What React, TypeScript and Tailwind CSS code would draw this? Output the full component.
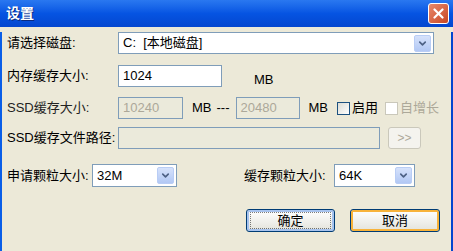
import { ChevronDown } from 'lucide-react';

const font = { fontFamily: '"Liberation Sans", "Noto Sans CJK SC", sans-serif' };

function DropArrow({ size = 'h-[17px] w-[17px]' }: { size?: string }) {
  return (
    <div className={`${size} flex items-center justify-center rounded-[2px] border border-[#b9cdf5] bg-gradient-to-b from-[#d6e2fb] to-[#b2c8f4]`}>
      <ChevronDown size={11} strokeWidth={3.5} className="text-[#4d6185]" />
    </div>
  );
}

function Select({ value, className }: { value: string; className: string }) {
  return (
    <div className={`flex items-center justify-between border border-[#7f9db9] bg-white pl-[4px] pr-[2px] ${className}`}>
      <span className="whitespace-pre text-[13px] text-black">{value}</span>
      <DropArrow />
    </div>
  );
}

function Input({ value, className, disabled }: { value?: string; className: string; disabled?: boolean }) {
  return (
    <div
      className={`flex items-center border border-[#7f9db9] pl-[4px] text-[13px] ${
        disabled ? 'bg-[#ebeadb] text-[#aca899]' : 'bg-white text-black'
      } ${className}`}
    >
      {value}
    </div>
  );
}

export default function App() {
  return (
    <div className="relative h-[251px] w-[453px] overflow-hidden bg-[#ece9d8] text-[13px] text-black" style={font}>
      <div className="flex h-[27px] items-center justify-between bg-gradient-to-b from-[#2a78f0] via-[#0654e2] to-[#0446cf] pl-[6px] pr-[4px]">
        <span className="text-[14px] font-bold text-white [text-shadow:1px_1px_0_#0a2a80]">设置</span>
        <div className="flex h-[21px] w-[21px] items-center justify-center rounded-[3px] border border-white bg-gradient-to-br from-[#e8896c] to-[#c8451f]">
          <svg width="11" height="11" viewBox="0 0 11 11">
            <path d="M1.5 1.5 L9.5 9.5 M9.5 1.5 L1.5 9.5" stroke="white" strokeWidth="2.2" strokeLinecap="round" />
          </svg>
        </div>
      </div>

      <div className="h-[224px] border-x-[2px] border-l-[#0a5ee8] border-r-[#0446cf] px-[5px]">
        <div className="mt-[5px] flex h-[22px] items-center">
          <span className="w-[111px]">请选择磁盘:</span>
          <Select value="C:  [本地磁盘]" className="h-[22px] w-[316px]" />
        </div>

        <div className="mt-[11px] flex h-[22px] items-center">
          <span className="w-[111px]">内存缓存大小:</span>
          <Input value="1024" className="h-[22px] w-[104px]" />
          <span className="ml-[32px] mt-[8px]">MB</span>
        </div>

        <div className="mt-[10px] flex h-[22px] items-center">
          <span className="w-[111px] text-[#222]">SSD缓存大小:</span>
          <Input value="10240" disabled className="h-[22px] w-[65px]" />
          <span className="ml-[9px]">MB</span>
          <span className="ml-[5px]">---</span>
          <Input value="20480" disabled className="ml-[6px] h-[22px] w-[64px]" />
          <span className="ml-[9px]">MB</span>
          <div className="ml-[9px] h-[13px] w-[13px] border border-[#1c5180] bg-gradient-to-br from-[#dcdcd5] to-white" />
          <span className="ml-[2px]">启用</span>
          <div className="ml-[7px] h-[13px] w-[13px] border border-[#cac8bb] bg-white" />
          <span className="ml-[2px] text-[#aca899]">自增长</span>
        </div>

        <div className="mt-[8px] flex h-[22px] items-center">
          <span className="w-[111px]">SSD缓存文件路径:</span>
          <Input disabled className="h-[22px] w-[262px]" />
          <div className="ml-[8px] flex h-[22px] w-[33px] items-center justify-center rounded-[3px] border border-[#cac8bb] bg-[#f4f3ee] text-[12px] text-[#aca899]">
            &gt;&gt;
          </div>
        </div>

        <div className="mt-[15px] flex h-[23px] items-center">
          <span className="w-[85px]">申请颗粒大小:</span>
          <Select value="32M" className="h-[23px] w-[85px]" />
          <span className="ml-[67px] w-[90px]">缓存颗粒大小:</span>
          <Select value="64K" className="h-[23px] w-[81px]" />
        </div>

        <div className="mt-[22px] flex h-[23px] items-center">
          <div className="ml-[239px] flex h-[23px] w-[89px] items-center justify-center rounded-[3px] border border-[#003c74] bg-gradient-to-b from-white to-[#e3e3db] shadow-[inset_0_0_0_2px_#a7c3ee]">
            <div className="flex h-[17px] w-[81px] items-center justify-center border border-dotted border-black/50">确定</div>
          </div>
          <div className="ml-[15px] flex h-[23px] w-[90px] items-center justify-center rounded-[3px] border border-[#003c74] bg-gradient-to-b from-white to-[#e3e3db] shadow-[inset_0_0_0_2px_#f8b33a]">
            取消
          </div>
        </div>
      </div>
    </div>
  );
}
